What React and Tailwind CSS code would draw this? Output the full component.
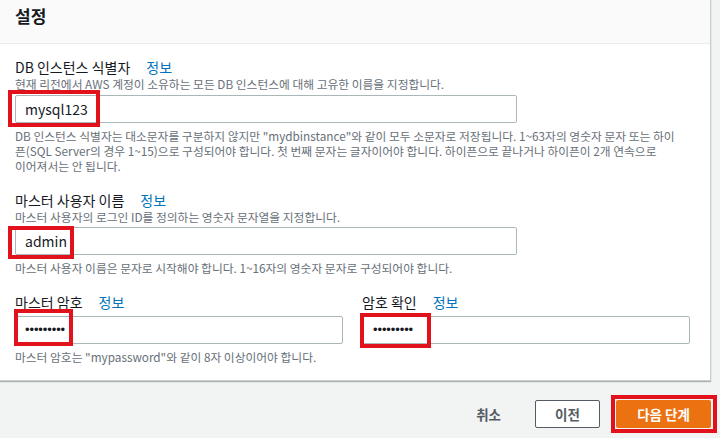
import React from "react";

const FONT = { fontFamily: '"Noto Sans CJK KR", "Noto Sans", sans-serif' };

function Label({ children, className = "" }) {
  return (
    <div className={"flex items-center h-[18px] text-[14px] leading-[18px] text-[#16191f] " + className}>
      <span>{children}</span>
      <span className="ml-[16px] text-[#0073bb]">정보</span>
    </div>
  );
}

function RedBox({ className }) {
  return <div className={"absolute border-[4px] border-[#e1121c] pointer-events-none " + className} />;
}

const DESC = "text-[11.75px] leading-[15px] text-[#687078] whitespace-nowrap";

export default function App() {
  return (
    <div style={FONT} className="w-[720px] h-[438px] bg-[#f2f3f3] overflow-hidden flex flex-col">
      <div className="w-[711px] bg-white border-r border-b border-[#c9cfcf] shadow-[0_1px_1px_rgba(0,28,36,0.3)]">
        <div className="h-[44px] bg-[#fafafa] border-b border-[#eaeded] px-[15px] pt-[6px]">
          <div className="text-[17px] leading-[20px] font-bold text-[#16191f]">설정</div>
        </div>
        <div className="px-[15px] pt-[14px] pb-[16px]">
          <Label>DB 인스턴스 식별자</Label>
          <div className={DESC}>
            현재 리전에서 AWS 계정이 소유하는 모든 DB 인스턴스에 대해 고유한 이름을 지정합니다.
          </div>
          <div className="relative mt-[4px] w-[502px]">
            <div className="h-[28px] border border-[#aab7b8] rounded-[2px] pl-[9px] flex items-center text-[14px] text-[#16191f]">
              mysql123
            </div>
            <RedBox className="left-[-7px] top-[-5px] w-[92px] h-[37px]" />
          </div>
          <div className={"mt-[5px] " + DESC}>
            DB 인스턴스 식별자는 대소문자를 구분하지 않지만 "mydbinstance"와 같이 모두 소문자로 저장됩니다. 1~63자의 영숫자 문자 또는 하이
            <br />
            픈(SQL Server의 경우 1~15)으로 구성되어야 합니다. 첫 번째 문자는 글자이어야 합니다. 하이픈으로 끝나거나 하이픈이 2개 연속으로
            <br />
            이어져서는 안 됩니다.
          </div>

          <Label className="mt-[18px]">마스터 사용자 이름</Label>
          <div className={DESC}>
            마스터 사용자의 로그인 ID를 정의하는 영숫자 문자열을 지정합니다.
          </div>
          <div className="relative mt-[3px] w-[502px]">
            <div className="h-[28px] border border-[#aab7b8] rounded-[2px] pl-[9px] flex items-center text-[14px] text-[#16191f]">
              admin
            </div>
            <RedBox className="left-[-7px] top-[-1px] w-[66px] h-[33px]" />
          </div>
          <div className={"mt-[5px] " + DESC}>
            마스터 사용자 이름은 문자로 시작해야 합니다. 1~16자의 영숫자 문자로 구성되어야 합니다.
          </div>

          <div className="mt-[18px] grid grid-cols-[328px_328px] gap-x-[19px]">
            <div>
              <Label>마스터 암호</Label>
              <div className="relative mt-[5px]">
                <div className="h-[28px] border border-[#aab7b8] rounded-[2px] pl-[9px] flex items-center text-[13px] text-[#16191f] tracking-[-0.1px]" style={{ fontFamily: '"Liberation Sans", sans-serif' }}>
                  •••••••••
                </div>
                <RedBox className="left-[-1px] top-[-7px] w-[59px] h-[37px]" />
              </div>
            </div>
            <div>
              <Label>암호 확인</Label>
              <div className="relative mt-[5px]">
                <div className="h-[28px] border border-[#aab7b8] rounded-[2px] pl-[10px] flex items-center text-[13px] text-[#16191f] tracking-[-0.1px]" style={{ fontFamily: '"Liberation Sans", sans-serif' }}>
                  •••••••••
                </div>
                <RedBox className="left-[-2px] top-[-3px] w-[71px] h-[35px]" />
              </div>
            </div>
          </div>
          <div className={"mt-[5px] " + DESC}>
            마스터 암호는 "mypassword"와 같이 8자 이상이어야 합니다.
          </div>
        </div>
      </div>

      <div className="w-[711px] flex justify-end items-center pt-[19px]">
        <div className="text-[13.5px] font-bold text-[#545b64] mr-[34px]">취소</div>
        <div className="h-[28px] w-[65px] border border-[#545b64] rounded-[2px] bg-white flex items-center justify-center text-[13.5px] font-bold text-[#545b64]">
          이전
        </div>
        <div className="relative ml-[16px]">
          <div className="h-[28px] w-[95px] bg-[#ec7211] rounded-[2px] flex items-center justify-center text-[13.5px] font-bold text-white">
            다음 단계
          </div>
          <RedBox className="left-[-5px] top-[-5px] w-[106px] h-[38px]" />
        </div>
      </div>
    </div>
  );
}
